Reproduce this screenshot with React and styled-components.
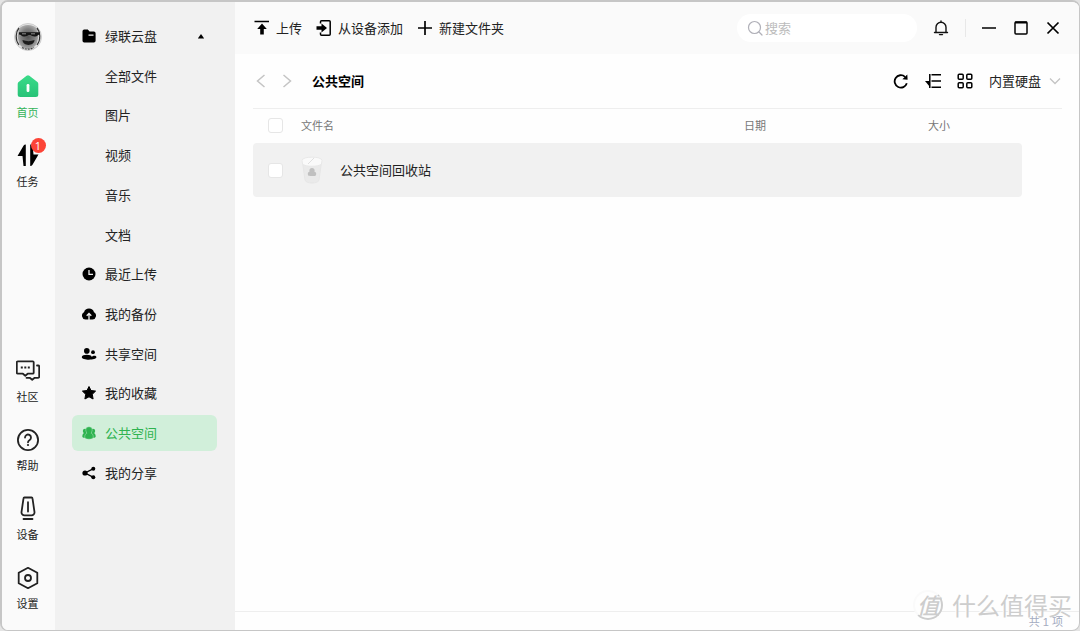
import React from 'react';
import styled, { createGlobalStyle, css } from 'styled-components';

const GlobalStyle = createGlobalStyle`
  *, *::before, *::after { box-sizing: border-box; }
  html, body, #root { height: 100%; }
  body {
    margin: 0;
    background: #e4e4e4;
    color: #222;
    font-family: "Noto Sans CJK SC", "Liberation Sans", sans-serif;
    font-size: 13px;
    line-height: 20px;
  }
  button, input, select { font: inherit; color: inherit; margin: 0; }
  ul { list-style: none; margin: 0; padding: 0; }
  svg { display: block; flex: none; }
`;

const Window = styled.div`
  position: relative;
  display: grid;
  grid-template-columns: 53px 180px minmax(0, 1fr);
  min-height: 100vh;
  border: 2px solid #c6c6c6;
  border-width: 2px 1px 1px 2px;
  border-radius: 8px;
  overflow: hidden;
  background: #fefefe;
`;

const Rail = styled.nav`
  display: flex;
  flex-direction: column;
  justify-content: space-between;
  padding: 21px 2px 19px 0;
  background: #fafafa;
`;

const RailGroup = styled.div`
  display: flex;
  flex-direction: column;
  align-items: center;
  gap: 23px;
`;

const Avatar = styled.button`
  padding: 0;
  border: 0;
  background: none;
  border-radius: 50%;
`;

const RailLink = styled.a`
  position: relative;
  display: flex;
  flex-direction: column;
  align-items: center;
  gap: 6px;
  font-size: 11px;
  line-height: 16px;
  text-decoration: none;
  color: ${(p) => (p.$active ? '#33b458' : '#222')};
`;

const Badge = styled.span`
  position: absolute;
  top: -5px;
  right: -6px;
  width: 15px;
  height: 15px;
  border-radius: 50%;
  background: #fc4437;
  color: #fff;
  font-family: "Open Sans", "Liberation Sans", sans-serif;
  font-size: 11px;
  line-height: 15px;
  text-align: center;
`;

const Sidebar = styled.nav`
  padding: 16px 18px 16px 17px;
  background: #f1f1f1;
`;

const SideList = styled.ul`
  display: flex;
  flex-direction: column;
  justify-content: space-between;
  min-height: 473px;
`;

const SideLink = styled.a`
  display: grid;
  grid-template-columns: 16px 1fr 10px;
  align-items: center;
  column-gap: 8px;
  height: 36px;
  padding: 0 11px 0 9px;
  border-radius: 6px;
  color: inherit;
  text-decoration: none;
  ${(p) =>
    p.$active &&
    css`
      background: #d1efda;
      color: #2fb350;
    `}
  span { grid-column: 2; }
`;

const Main = styled.main`
  display: flex;
  flex-direction: column;
  min-width: 0;
`;

const TopBar = styled.header`
  display: flex;
  align-items: center;
  justify-content: space-between;
  height: 52px;
  padding: 0 10px 0 19px;
  background: #fafafa;
`;

const Cluster = styled.div`
  display: flex;
  align-items: center;
  gap: ${(p) => p.$gap}px;
`;

const ToolButton = styled.button`
  display: flex;
  align-items: center;
  gap: 6px;
  padding: 0;
  border: 0;
  background: none;
`;

const IconButton = styled.button`
  display: grid;
  place-items: center;
  width: ${(p) => p.$width}px;
  height: 28px;
  padding: 0;
  border: 0;
  background: none;
`;

const SearchBox = styled.label`
  display: flex;
  align-items: center;
  gap: 2px;
  width: 180px;
  height: 28px;
  padding: 0 10px;
  border-radius: 14px;
  background: #fff;
  input {
    flex: 1;
    min-width: 0;
    padding: 0;
    border: 0;
    outline: 0;
    background: none;
  }
  input::placeholder { color: #bcbcbc; opacity: 1; }
`;

const Divider = styled.span`
  width: 1px;
  height: 18px;
  margin-right: 7px;
  background: #e8e8e8;
`;

const PathBar = styled.div`
  display: flex;
  align-items: center;
  justify-content: space-between;
  height: 55px;
  margin: 0 17px 0 18px;
  border-bottom: 1px solid #eee;
`;

const Title = styled.h1`
  margin: 0 0 0 7px;
  color: #000;
  font-size: 13px;
  line-height: 20px;
  font-weight: 700;
`;

const DiskPicker = styled.label`
  display: grid;
  grid-template-columns: 59px 14px;
  align-items: center;
  select {
    grid-area: 1 / 1 / 2 / 3;
    width: 100%;
    padding: 0;
    border: 0;
    outline: 0;
    background: none;
    appearance: none;
  }
  svg { grid-area: 1 / 2; pointer-events: none; }
`;

const FileTable = styled.table`
  width: calc(100% - 75px);
  margin-left: 18px;
  table-layout: fixed;
  border-collapse: separate;
  border-spacing: 0;
  text-align: left;
  th, td { padding: 0; }
  th {
    height: 34px;
    padding-bottom: 2px;
    color: #777;
    font-size: 11px;
    font-weight: 400;
  }
  td {
    height: 54px;
    background: #f1f1f1;
  }
  td:first-child { border-radius: 4px 0 0 4px; }
  td:last-child { border-radius: 0 4px 4px 0; }
`;

const Col = styled.col`
  width: ${(p) => p.$width};
`;

const Check = styled.input`
  display: block;
  appearance: none;
  width: 15px;
  height: 15px;
  margin: 0 0 0 15px;
  border: 1px solid #e6e6e6;
  border-radius: 3px;
  background: #fff;
`;

const FileName = styled.div`
  display: flex;
  align-items: center;
  gap: 17px;
`;

const StatusBar = styled.footer`
  margin-top: auto;
  padding: 2px 16px 0 0;
  border-top: 1px solid #eee;
  color: #a3abc0;
  font-family: "Liberation Sans", "Noto Sans CJK SC", sans-serif;
  font-size: 11px;
  line-height: 16px;
  text-align: right;
`;

const Watermark = styled.div`
  position: absolute;
  right: 7px;
  bottom: 10px;
  display: flex;
  align-items: center;
  gap: 9px;
  color: #cdcdcd;
  font-size: 24px;
  line-height: 28px;
  text-shadow: -1px -1px 0 #fff;
  pointer-events: none;
`;

const Seal = styled.span`
  width: 30px;
  height: 30px;
  border: 2px solid #fafafa;
  border-right-color: #cdcdcd;
  border-bottom-color: #cdcdcd;
  border-radius: 50%;
  background: #fefefe;
  font-size: 22px;
  line-height: 24px;
  font-weight: 500;
  font-style: italic;
  text-align: center;
`;

const Icon = ({ size = 16, box = 16, children, ...rest }) => (
  <svg
    width={size}
    height={size}
    viewBox={`0 0 ${box} ${box}`}
    fill="none"
    stroke="none"
    aria-hidden="true"
    {...rest}
  >
    {children}
  </svg>
);

const line = { stroke: 'currentColor', strokeLinecap: 'round', strokeLinejoin: 'round' };

const AvatarArt = () => (
  <Icon size={28} box={28}>
    <defs>
      <radialGradient id="face" cx="50%" cy="50%" r="55%">
        <stop offset="0" stopColor="#555" />
        <stop offset="0.6" stopColor="#808080" />
        <stop offset="1" stopColor="#b4b4b4" />
      </radialGradient>
    </defs>
    <circle cx="14" cy="14" r="13.500" fill="#e4e4e4" stroke="#c4c4c4" strokeWidth=".8" />
    <path d="M5 6C7 3 10 2 14 2s7 1 9 4l1.500 7-1.500 7c-2 4-5 6-9 6s-7-2-9-6l-1.500-7Z" fill="url(#face)" />
    <path d="M5 5C1.500 9 1 17 5 22M23 5c3.500 4 4 12 0 17" stroke="#333" strokeWidth="1.200" />
    <path d="M8 24.500c4 2.300 8 2.300 12 0" stroke="#444" strokeWidth="1.200" strokeDasharray="2 1" />
    <path d="M5 9.200h21v2.200l-2 .5c-1 2-6 2-7.500.2h-2c-1.500 1.800-6.500 1.800-7.500-.2l-2-.5Z" fill="#151515" />
    <path d="M8 10.800h4M17 10.800h4" stroke="#999" strokeWidth=".9" />
    <path d="M8.500 17c4 1.500 8 1.500 12 0-.5 6.500-11.500 6.500-12 0Z" fill="#1c1c1c" />
  </Icon>
);

const HomeIcon = () => (
  <Icon size={24} box={24}>
    <defs>
      <linearGradient id="home" x1="0" y1="0" x2="0" y2="1">
        <stop offset="0" stopColor="#3bdc8a" />
        <stop offset="1" stopColor="#27c277" />
      </linearGradient>
    </defs>
    <path d="M10.600 1.700a2.300 2.300 0 0 1 2.800 0l8 6.400c.6.5.9 1.100.9 1.900v10.500a2.500 2.500 0 0 1-2.500 2.500H4.200a2.500 2.500 0 0 1-2.500-2.500V10c0-.8.300-1.400.9-1.900Z" fill="url(#home)" />
    <rect x="10.600" y="10" width="2.800" height="8" rx="1.200" fill="#fff" />
  </Icon>
);

const TasksIcon = () => (
  <Icon size={24} box={24}>
    <path d="M9.800 1.500v21.500H7.500L6.500 13H1.500L7.500 2.700Q8.200 1.500 9.800 1.500Z" fill="#000" />
    <path d="M14.200 23V1.500h2.300l1 10h5L16.500 21.800q-.7 1.200-2.300 1.200Z" fill="#000" />
  </Icon>
);

const CommunityIcon = () => (
  <Icon size={24} box={24}>
    <g transform="translate(0 1)">
      <g {...line} strokeWidth="1.800">
        <path d="M1.800 2.300h14.900a1 1 0 0 1 1 1v10.400a1 1 0 0 1-1 1h-5l-2.400 2-2.400-2H1.800a1 1 0 0 1-1-1V3.300a1 1 0 0 1 1-1Z" />
        <path d="M21 6.500h1.200a1 1 0 0 1 1 1v10.300a1 1 0 0 1-1 1h-3.500l-2.500 2-2.500-2H10.500" />
      </g>
      <path d="M4.800 7.600h2v2h-2ZM8.300 7.600h2v2h-2ZM11.800 7.600h2v2h-2Z" fill="currentColor" />
    </g>
  </Icon>
);

const HelpIcon = () => (
  <Icon size={24} box={24}>
    <g transform="translate(0 1)">
      <g {...line} strokeWidth="1.800">
        <circle cx="12" cy="12" r="10.100" />
        <path d="M9 9.500a3 3 0 1 1 4.700 2.500c-1.200.8-1.700 1.200-1.700 2.300" />
      </g>
      <circle cx="12" cy="17" r="1.100" fill="currentColor" />
    </g>
  </Icon>
);

const DeviceIcon = () => (
  <Icon size={24} box={24}>
    <g {...line} strokeWidth="1.800">
      <path d="M8.500 1.500h7a1 1 0 0 1 1 .9l2 13.700a3 3 0 0 1-3 3.300h-7a3 3 0 0 1-3-3.300l2-13.700a1 1 0 0 1 1-.9Z" />
      <path d="M12 6.200v9.300M7.500 23h9" />
    </g>
  </Icon>
);

const SettingsIcon = () => (
  <Icon size={24} box={24}>
    <g {...line} strokeWidth="1.800" transform="translate(0 1)">
      <path d="m12 1.800 9.300 5v10.400l-9.300 5-9.300-5V6.800Z" />
      <circle cx="12" cy="12" r="3" />
    </g>
  </Icon>
);

const sideIcons = {
  folder: (
    <Icon>
      <path d="M1.500 3.200A1.700 1.700 0 0 1 3.200 1.500h3.600l1.800 2h4.300a1.700 1.700 0 0 1 1.700 1.700v7.600a1.700 1.700 0 0 1-1.700 1.700H3.200a1.700 1.700 0 0 1-1.700-1.700Z" fill="#000" />
      <path d="M7.500 7.200h5" stroke="#f1f1f1" strokeWidth="1.200" />
    </Icon>
  ),
  clock: (
    <Icon>
      <circle cx="8" cy="8" r="6.500" fill="#000" />
      <path d="M8 4v4.300h4" stroke="#f1f1f1" strokeWidth="1.300" />
    </Icon>
  ),
  cloud: (
    <Icon>
      <path d="M4.500 13.500A3.900 3.900 0 0 1 3 6.200a5.200 5.200 0 0 1 10 0 3.900 3.900 0 0 1-1.500 7.300Z" fill="#000" />
      <path d="M8 14V8M5.700 9.800 8 7.500l2.300 2.300" stroke="#f1f1f1" strokeWidth="1.300" />
    </Icon>
  ),
  people: (
    <Icon>
      <circle cx="5.800" cy="4.900" r="2.800" fill="#000" />
      <circle cx="12" cy="6.200" r="1.900" fill="#000" />
      <path d="M.8 11c0-3 10-3 10 0h0c1-1.600 4.600-1.500 4.600.3 0 3-14.600 3.500-14.600-.3Z" fill="#000" />
    </Icon>
  ),
  star: (
    <Icon>
      <path d="m8 1.500 2 4 4.600.6-3.300 3.200.8 4.700L8 11.800 3.900 14l.8-4.700L1.400 6.100 6 5.500Z" fill="#000" stroke="#000" strokeLinejoin="round" />
    </Icon>
  ),
  group: (
    <Icon>
      <g fill="currentColor">
        <circle cx="4" cy="6" r="2.200" />
        <circle cx="12" cy="6" r="2.200" />
        <path d="M1.300 11.500c0-3 1.500-3.800 3-3.800h7.400c1.500 0 3 .8 3 3.800 0 1-1 1.300-2.300 1.300H3.600c-1.300 0-2.300-.3-2.300-1.300Z" />
      </g>
      <g fill="currentColor" stroke="#d1efda" strokeWidth=".4">
        <circle cx="8" cy="5" r="3.300" />
        <path d="M3.700 12c0-3 1.700-4.400 4.300-4.400s4.300 1.400 4.300 4.400c0 1.500-1.500 2.200-4.300 2.200S3.700 13.500 3.700 12Z" />
      </g>
      <circle cx="8" cy="7" r="2.200" fill="currentColor" />
    </Icon>
  ),
  share: (
    <Icon>
      <path d="M12 3.800 4 8l8 4.200" stroke="#000" strokeWidth="1.300" />
      <circle cx="4" cy="8" r="2.600" fill="#000" />
      <circle cx="12.300" cy="3.800" r="2" fill="#000" />
      <circle cx="12.300" cy="12.200" r="2" fill="#000" />
    </Icon>
  ),
};

const sideItems = [
  { label: '绿联云盘', icon: 'folder', expanded: true },
  { label: '全部文件' },
  { label: '图片' },
  { label: '视频' },
  { label: '音乐' },
  { label: '文档' },
  { label: '最近上传', icon: 'clock' },
  { label: '我的备份', icon: 'cloud' },
  { label: '共享空间', icon: 'people' },
  { label: '我的收藏', icon: 'star' },
  { label: '公共空间', icon: 'group', active: true },
  { label: '我的分享', icon: 'share' },
];

const railBottom = [
  { label: '社区', icon: <CommunityIcon /> },
  { label: '帮助', icon: <HelpIcon /> },
  { label: '设备', icon: <DeviceIcon /> },
  { label: '设置', icon: <SettingsIcon /> },
];

const BinIcon = () => (
  <svg width="22" height="28" viewBox="0 0 22 28" fill="none" aria-hidden="true">
    <path d="M1.500 6 4 24c.6 4 13.400 4 14 0l2.500-18Z" fill="#eaeaea" stroke="#e6e6e6" />
    <path d="M1 4.500C1 0 21 0 21 4.500l-.5 3.500C18 11 4 11 1.500 8Z" fill="#fafafa" stroke="#e8e8e8" />
    <path d="m7 8 6-6" stroke="#e0e0e0" />
    <g fill="#c0c0c0">
      <circle cx="11" cy="14.500" r="2.600" />
      <path d="M6.800 17.500c0-3 8.400-3 8.400 0s-1 2.500-4.200 2.500-4.200 0-4.200-2.500Z" />
    </g>
  </svg>
);

export default function App() {
  return (
    <>
      <GlobalStyle />
      <Window>
        <Rail>
          <RailGroup>
            <Avatar type="button" aria-label="头像"><AvatarArt /></Avatar>
            <RailLink href="#home" $active><HomeIcon />首页</RailLink>
            <RailLink href="#tasks"><TasksIcon /><Badge>1</Badge>任务</RailLink>
          </RailGroup>
          <RailGroup>
            {railBottom.map((item) => (
              <RailLink href="#" key={item.label}>{item.icon}{item.label}</RailLink>
            ))}
          </RailGroup>
        </Rail>

        <Sidebar>
          <SideList>
            {sideItems.map((item) => (
              <li key={item.label}>
                <SideLink href="#" $active={item.active}>
                  {item.icon && sideIcons[item.icon]}
                  <span>{item.label}</span>
                  {item.expanded && (
                    <Icon size={10} box={10}><path d="M5 3 8.200 7.500H1.800Z" fill="#000" /></Icon>
                  )}
                </SideLink>
              </li>
            ))}
          </SideList>
        </Sidebar>

        <Main>
          <TopBar>
            <Cluster $gap={14}>
              <ToolButton type="button">
                <Icon>
                  <path d="M.500 1.500h14.500" stroke="#000" strokeWidth="1.600" />
                  <path d="M8 3.500 12.800 9H9.800v5.500H6.200V9H3.200Z" fill="#000" />
                </Icon>
                上传
              </ToolButton>
              <ToolButton type="button">
                <Icon>
                  <path d="M4.500 3.500V1.800a1 1 0 0 1 1-1h7.700a1 1 0 0 1 1 1v12.400a1 1 0 0 1-1 1H5.500a1 1 0 0 1-1-1v-1.700" stroke="#000" strokeWidth="1.500" />
                  <path d="M.500 6.300h5V3.500L11 8l-5.500 4.500V9.700h-5Z" fill="#000" />
                </Icon>
                从设备添加
              </ToolButton>
              <ToolButton type="button">
                <Icon><path d="M8 1v14M1 8h14" stroke="#000" strokeWidth="1.700" /></Icon>
                新建文件夹
              </ToolButton>
            </Cluster>
            <Cluster $gap={0}>
              <SearchBox>
                <Icon {...line} stroke="#b0b0b8" strokeWidth="1.200">
                  <circle cx="7.500" cy="7.500" r="6" /><path d="m12 12 3 3" />
                </Icon>
                <input type="search" placeholder="搜索" aria-label="搜索" />
              </SearchBox>
              <IconButton type="button" aria-label="通知" $width={48}>
                <Icon {...line} stroke="#111" strokeWidth="1.400">
                  <path d="M1.500 12.500h13M3 12.500V7.200a5 5 0 0 1 10 0v5.300M8 1v1.200M6.500 14.600h3" />
                </Icon>
              </IconButton>
              <Divider />
              <IconButton type="button" aria-label="最小化" $width={32}>
                <Icon><path d="M1 8h14" stroke="#000" strokeWidth="1.600" /></Icon>
              </IconButton>
              <IconButton type="button" aria-label="最大化" $width={32}>
                <Icon><rect x="2" y="2" width="12" height="12" rx="1" stroke="#000" strokeWidth="1.500" /><path d="M2 2.500h12" stroke="#000" strokeWidth="2" /></Icon>
              </IconButton>
              <IconButton type="button" aria-label="关闭" $width={32}>
                <Icon><path d="m2.500 2.500 11 11m0-11-11 11" stroke="#000" strokeWidth="1.700" /></Icon>
              </IconButton>
            </Cluster>
          </TopBar>

          <PathBar>
            <Cluster $gap={10}>
              <IconButton type="button" aria-label="后退" $width={16}>
                <Icon><path d="m11.500 2-7 6 7 6" stroke="#c4c4c4" strokeWidth="1.500" /></Icon>
              </IconButton>
              <IconButton type="button" aria-label="前进" $width={16}>
                <Icon><path d="m4.500 2 7 6-7 6" stroke="#c4c4c4" strokeWidth="1.500" /></Icon>
              </IconButton>
              <Title>公共空间</Title>
            </Cluster>
            <Cluster $gap={16}>
              <IconButton type="button" aria-label="刷新" $width={16}>
                <Icon>
                  <path d="M13.800 10.200A6.200 6.200 0 1 1 12 3.800" stroke="#000" strokeWidth="1.800" />
                  <path d="m14.300 1.500.3 5.200-5.200-.5Z" fill="#000" />
                </Icon>
              </IconButton>
              <IconButton type="button" aria-label="排序" $width={16}>
                <Icon>
                  <path d="M4.800 1v14M6.500 1.800H16M6.500 8H16M6.500 14.200H16" stroke="#000" strokeWidth="1.500" />
                  <path d="M0 8h5v6Z" fill="#000" />
                </Icon>
              </IconButton>
              <IconButton type="button" aria-label="网格视图" $width={16}>
                <Icon stroke="#000" strokeWidth="1.500">
                  <rect x="1.200" y="1.200" width="5" height="5" rx="1" />
                  <rect x="9.800" y="1.200" width="5" height="5" rx="1" />
                  <rect x="1.200" y="9.800" width="5" height="5" rx="1" />
                  <rect x="9.800" y="9.800" width="5" height="5" rx="1" />
                </Icon>
              </IconButton>
              <DiskPicker>
                <select aria-label="硬盘"><option>内置硬盘</option></select>
                <Icon size={14} box={14}><path d="m2 4.500 5 5 5-5" stroke="#c4c4c4" strokeWidth="1.300" /></Icon>
              </DiskPicker>
            </Cluster>
          </PathBar>

          <FileTable>
            <colgroup>
              <Col $width="48px" /><Col $width="auto" /><Col $width="184px" /><Col $width="94px" />
            </colgroup>
            <thead>
              <tr>
                <th><Check type="checkbox" aria-label="全选" /></th>
                <th>文件名</th>
                <th>日期</th>
                <th>大小</th>
              </tr>
            </thead>
            <tbody>
              <tr>
                <td><Check type="checkbox" aria-label="选择 公共空间回收站" /></td>
                <td><FileName><BinIcon />公共空间回收站</FileName></td>
                <td />
                <td />
              </tr>
            </tbody>
          </FileTable>

          <StatusBar>共 1 项</StatusBar>
        </Main>

        <Watermark aria-hidden="true"><Seal>值</Seal>什么值得买</Watermark>
      </Window>
    </>
  );
}
